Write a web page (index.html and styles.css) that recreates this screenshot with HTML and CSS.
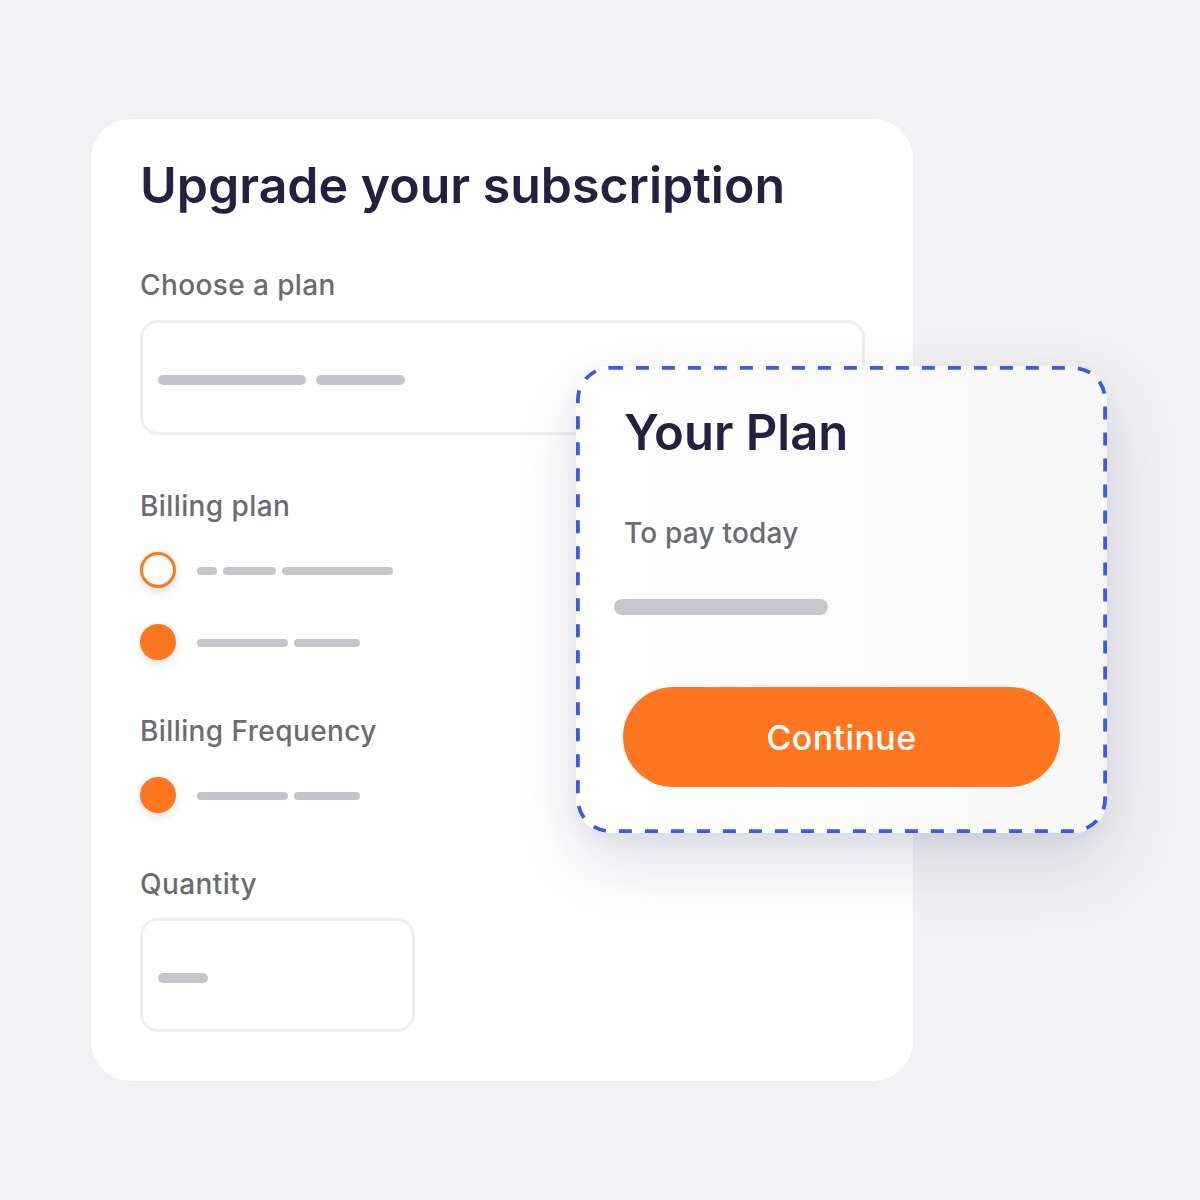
FILE: index.html
```html
<!DOCTYPE html>
<html lang="en">
<head>
<meta charset="utf-8">
<title>Upgrade your subscription</title>
<link rel="stylesheet" href="styles.css">
</head>
<body>
<div class="stage">
  <div class="card">
    <h1 class="title">Upgrade your subscription</h1>

    <div class="label label-first">Choose a plan</div>
    <div class="field field-wide">
      <span class="bar" style="width:148px"></span>
      <span class="bar" style="width:89px"></span>
    </div>

    <div class="label">Billing plan</div>
    <div class="option option-first">
      <span class="radio"></span>
      <span class="sbar" style="width:20px"></span>
      <span class="sbar" style="width:53px"></span>
      <span class="sbar" style="width:111px"></span>
    </div>
    <div class="option option-next">
      <span class="radio radio-on"></span>
      <span class="sbar" style="width:91px"></span>
      <span class="sbar" style="width:66px"></span>
    </div>

    <div class="label">Billing Frequency</div>
    <div class="option option-first">
      <span class="radio radio-on"></span>
      <span class="sbar" style="width:91px"></span>
      <span class="sbar" style="width:66px"></span>
    </div>

    <div class="label">Quantity</div>
    <div class="field field-small">
      <span class="bar" style="width:50px"></span>
    </div>
  </div>

  <div class="plan">
    <svg class="dash" width="531" height="467" viewBox="0 0 531 467" aria-hidden="true">
      <rect x="1.9" y="1.9" width="527.2" height="463.2" rx="32" ry="32" fill="none" stroke="#3c5be0" stroke-width="3.8" stroke-dasharray="13 13"/>
    </svg>
    <h2 class="plan-title">Your Plan</h2>
    <div class="plan-sub">To pay today</div>
    <div class="plan-bar"></div>
    <button class="btn">Continue</button>
  </div>
</div>
</body>
</html>
```
FILE: styles.css
```css
* { box-sizing: border-box; }
html, body { margin: 0; padding: 0; }
body {
  background: #f1f1f3;
  font-family: Inter, "Noto Sans", sans-serif;
  width: 1200px;
  height: 1200px;
  overflow: hidden;
}
.stage {
  position: relative;
  padding: 119px 0 0 91px;
}
.card {
  width: 822px;
  height: 962px;
  background: #ffffff;
  border-radius: 40px;
  padding: 36px 49px 0 49px;
}
.title {
  margin: 0;
  font-size: 50px;
  line-height: 60px;
  font-weight: 600;
  color: #271f41;
  letter-spacing: 0;
}
.label {
  margin-top: 54px;
  font-size: 28px;
  line-height: 34px;
  font-weight: 500;
  color: #6c6b71;
  letter-spacing: 0.4px;
}
.label-first { margin-top: 53px; }
.field {
  margin-top: 18px;
  border: 3px solid #efeff1;
  border-radius: 18px;
  display: flex;
  align-items: center;
  gap: 10px;
  padding-left: 15px;
}
.field-wide { width: 725px; height: 115px; padding-top: 5px; }
.field-small { width: 275px; height: 114px; margin-top: 17px; padding-top: 6px; }
.bar {
  display: block;
  height: 10px;
  border-radius: 5px;
  background: #c5c4c9;
}
.option {
  display: flex;
  align-items: center;
  height: 36px;
}
.option-first { margin-top: 29px; }
.option-next { margin-top: 36px; }
.radio {
  width: 36px;
  height: 36px;
  border-radius: 50%;
  border: 3px solid #fe7720;
  background: #fff;
  box-shadow: 0 4px 8px rgba(0,0,0,0.12);
  margin-right: 21px;
  flex: none;
}
.radio-on { background: #fe7720; }
.sbar {
  display: block;
  height: 8px;
  border-radius: 4px;
  background: #c5c4c9;
  margin-right: 6px;
  margin-top: 2px;
}
.plan {
  position: absolute;
  left: 576px;
  top: 366px;
  width: 531px;
  height: 467px;
  border-radius: 33px;
  background: linear-gradient(90deg, #ffffff 0%, #f7f7f8 100%);
  box-shadow: 0 30px 70px rgba(45, 45, 100, 0.15), 0 8px 20px rgba(45, 45, 100, 0.06);
  padding: 0 47px 0 48px;
  display: flex;
  flex-direction: column;
}
.dash {
  position: absolute;
  left: 0;
  top: 0;
}
.plan-title {
  margin: 37px 0 0 0;
  font-size: 49px;
  line-height: 60px;
  font-weight: 600;
  color: #271f41;
  letter-spacing: 0;
}
.plan-sub {
  margin-top: 53px;
  font-size: 28px;
  line-height: 34px;
  font-weight: 500;
  color: #6c6b71;
  letter-spacing: 0.2px;
}
.plan-bar {
  margin-top: 49px;
  margin-left: -10px;
  width: 214px;
  height: 16px;
  border-radius: 8px;
  background: #c8c7cc;
}
.btn {
  margin-top: 72px;
  margin-left: -1px;
  width: 437px;
  height: 100px;
  border: none;
  border-radius: 50px;
  background: #fe7720;
  color: #ffffff;
  font-family: Inter, "Noto Sans", sans-serif;
  font-size: 34px;
  font-weight: 500;
  letter-spacing: 0.4px;
  cursor: pointer;
}
```
